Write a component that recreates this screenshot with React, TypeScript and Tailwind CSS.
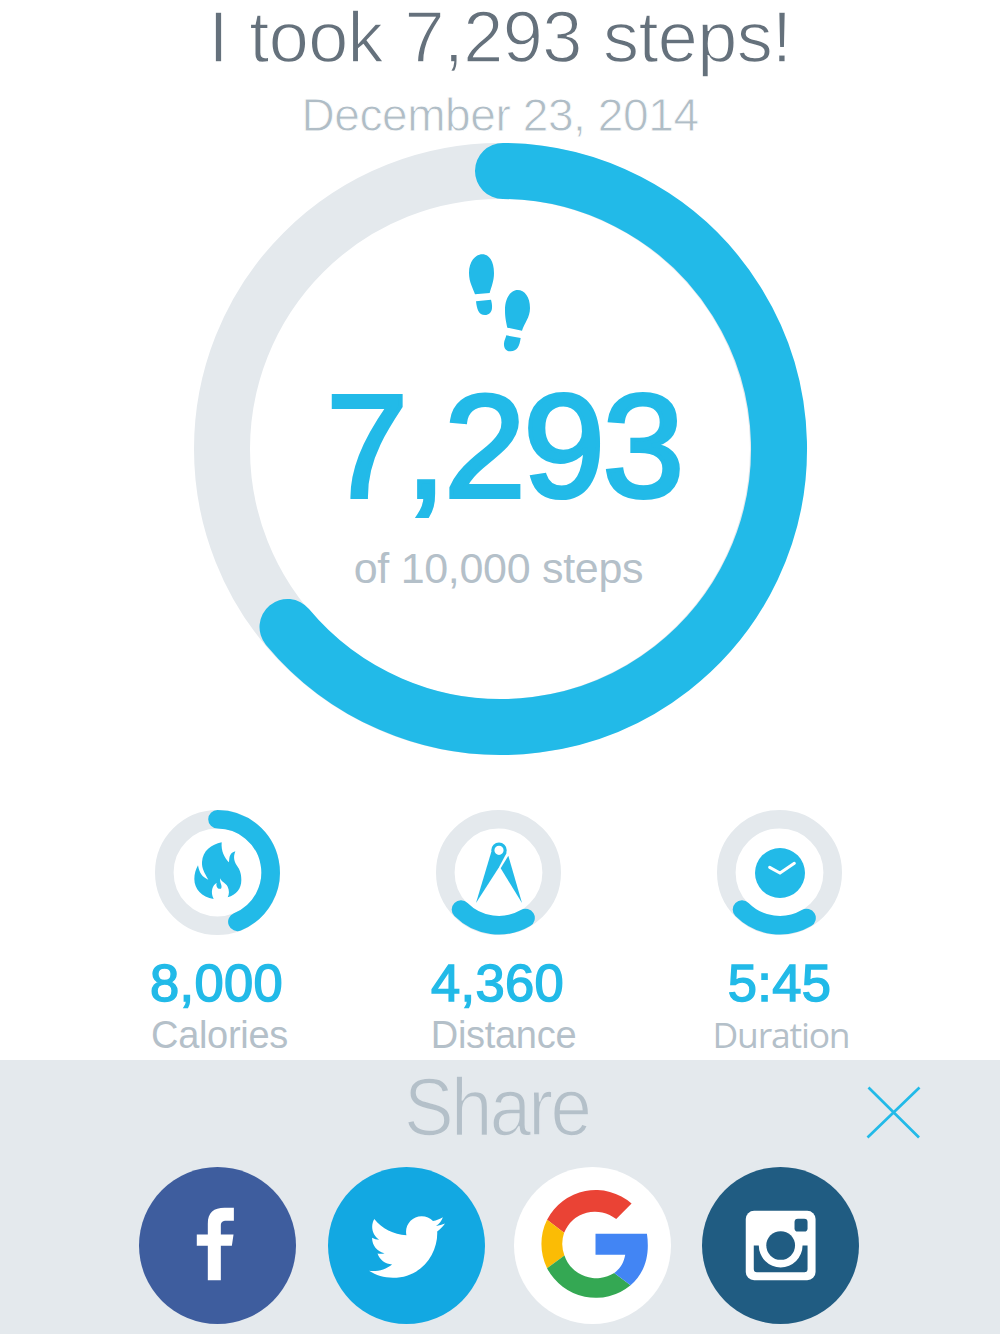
import React from 'react';
import { FaTwitter } from 'react-icons/fa';

const BLUE = '#22bae8';
const TRACK = '#e4e9ed';

interface RingProps {
  size: number;
  stroke: number;
  arc: string;
}

const Ring: React.FC<RingProps> = ({ size, stroke, arc }) => (
  <svg
    width={size}
    height={size}
    viewBox={`0 0 ${size} ${size}`}
    fill="none"
    className="overflow-visible [grid-area:1/1]"
  >
    <circle cx={size / 2} cy={size / 2} r={(size - stroke) / 2} stroke={TRACK} strokeWidth={stroke} />
    <path d={arc} stroke={BLUE} strokeWidth={stroke} strokeLinecap="round" />
  </svg>
);

const Footprints = () => (
  <svg width="62" height="98" viewBox="87 41 186 294" fill={BLUE}>
    <path d="M105 162C99 143 87 126 87 98C87 64 106 42 127 42C148 42 162 64 162 98C162 122 154 140 149 158Z" />
    <path d="M108 183L153 178C155 186 157 194 156 203C155 217 146 224 135 224C115 224 111 207 108 183Z" />
    <path d="M202 262C198 243 195 232 195 209C195 172 213 149 233 149C254 149 270 170 270 203C270 232 253 248 246 271Z" />
    <path d="M199 285L242 293C239 317 231 333 212 333C198 333 191 323 192 309C193 300 197 293 199 285Z" />
  </svg>
);

const Flame = () => (
  <svg width="48" height="58" viewBox="161 124 144 174" fill={BLUE}>
    <path d="M244 125C242 153 252 169 265 185C269 180 262 158 285 152C277 172 283 185 291 197C297 206 303 216 303 238C303 264 288 283 262 290C267 281 267 268 262 258C256 247 242 243 240 233C236 244 248 256 242 264C232 267 226 257 229 246C217 254 209 272 220 295C184 289 162 265 162 235C162 219 166 208 173 194C177 217 185 229 204 237C192 216 184 203 185 184C187 150 213 132 244 125Z" />
  </svg>
);

const Compass = () => (
  <svg width="48" height="62" viewBox="165 124 144 186">
    <path fill={BLUE} d="M214 153L260 156L237 200L168 307Z" />
    <circle cx="237" cy="149" r="18.5" fill="#fff" stroke={BLUE} strokeWidth="9.5" />
    <path fill={BLUE} d="M265 165L306 307L242 203Z" />
  </svg>
);

const Clock = () => (
  <svg width="50" height="50" viewBox="0 0 150 150" fill="none">
    <circle cx="75" cy="75" r="75" fill={BLUE} />
    <path d="M44 58L75 75L118 46" stroke="#fff" strokeWidth="9" strokeLinecap="round" strokeLinejoin="miter" />
  </svg>
);

const lowArc = 'M25 99.5A53.2 53.2 0 0 0 89.5 108';

const stats = [
  {
    value: '8,000',
    label: 'Calories',
    icon: <Flame />,
    iconClass: 'pb-1 pl-px',
    arc: 'M62.5 9.3A53.2 53.2 0 0 1 82.4 111.8',
    column: 'ml-[117px]',
    valueClass: '-ml-px',
    labelClass: 'text-[38px] tracking-[-0.3px] ml-[5px] font-["Liberation_Sans",sans-serif]',
  },
  {
    value: '4,360',
    label: 'Distance',
    icon: <Compass />,
    iconClass: 'pl-px',
    arc: lowArc,
    column: 'ml-[81px]',
    valueClass: '-ml-px',
    labelClass: 'text-[38px] tracking-[-0.3px] ml-[11px] font-["Liberation_Sans",sans-serif]',
  },
  {
    value: '5:45',
    label: 'Duration',
    icon: <Clock />,
    iconClass: '',
    arc: lowArc,
    column: 'ml-[81.5px]',
    valueClass: '',
    labelClass: '-mt-px text-[35.5px] tracking-[-1.2px] ml-[3px] font-["Open_Sans",sans-serif]',
  },
];

const FacebookLogo = () => (
  <svg width="157" height="157" viewBox="28 22 470 470">
    <circle cx="263" cy="257" r="235" fill="#3e5d9e" />
    <path
      fill="#fff"
      d="M234 361V258H201V224H234V192C234 158 252 144 284 144H312V183H290C277 183 273 187 273 199V224H311L306 258H273V361Z"
    />
  </svg>
);

const TwitterLogo = () => (
  <div className="flex h-[157px] w-[157px] items-center justify-center rounded-full bg-[#12a8e2] pt-[3px] pl-px">
    <FaTwitter size={76} color="#fff" />
  </div>
);

const GoogleLogo = () => (
  <svg width="157" height="157" viewBox="27 22 470 470">
    <circle cx="262" cy="257" r="235" fill="#fff" />
    <path fill="#ea4335" d="M126 180A164 164 0 0 1 379 131L333 178A100 100 0 0 0 177 219Z" />
    <path fill="#fbbc05" d="M126 180A164 164 0 0 0 126 325L178 287A100 100 0 0 1 177 219Z" />
    <path fill="#34a853" d="M126 325A164 164 0 0 0 376 376L327 339A100 100 0 0 1 178 287Z" />
    <path fill="#4285f4" d="M271 222H425C433 278 424 334 376 376L327 339C346 326 356 308 360 285H271Z" />
  </svg>
);

const InstagramLogo = () => (
  <svg width="157" height="157" viewBox="35 22 470 470">
    <circle cx="270" cy="257" r="235" fill="#205c82" />
    <rect x="166" y="153" width="209" height="208" rx="25" fill="#fff" />
    <path fill="#205c82" d="M190 257H205A65.5 65.5 0 0 0 336 257H351V328Q351 337 342 337H199Q190 337 190 328Z" />
    <circle cx="270.5" cy="257" r="43" fill="#205c82" />
    <rect x="312" y="177" width="39" height="38" rx="10" fill="#205c82" />
  </svg>
);

const networks = [
  { name: 'Facebook', logo: <FacebookLogo />, className: 'ml-[139px]' },
  { name: 'Twitter', logo: <TwitterLogo />, className: 'ml-8' },
  { name: 'Google', logo: <GoogleLogo />, className: 'ml-[29px]' },
  { name: 'Instagram', logo: <InstagramLogo />, className: 'ml-[31px]' },
];

export default function App() {
  return (
    <div className='flex h-[1334px] w-[1000px] flex-col bg-white font-["Liberation_Sans",sans-serif]'>
      <header className="flex h-[143px] shrink-0 flex-col items-center whitespace-nowrap">
        <h1 className="text-[72px] leading-[74px] tracking-[-0.6px] text-[#65717c] [-webkit-text-stroke:1.4px_#fff] [word-spacing:2px]">
          I took 7,293 steps!
        </h1>
        <p className="pt-[13px] text-[46px] leading-[57px] tracking-[-0.4px] text-[#b0bdc6] [-webkit-text-stroke:0.8px_#fff]">
          December 23, 2014
        </p>
      </header>

      <section className="grid h-[612px] shrink-0 justify-center">
        <Ring size={612} stroke={56} arc="M309 28A278 278 0 1 1 93.5 484" />
        <div className="flex flex-col items-center pt-[111px] whitespace-nowrap [grid-area:1/1]">
          <Footprints />
          <div className="mt-3.5 pl-2 text-[147px] leading-[160px] tracking-[-2.5px] text-[#22bae8] [-webkit-text-stroke:4px_#22bae8]">
            7,293
          </div>
          <p className="mt-[17px] -ml-[3px] text-[43px] leading-[50px] tracking-[-0.3px] text-[#b4c0c9]">
            of 10,000 steps
          </p>
        </div>
      </section>

      <section className="flex h-[305px] shrink-0 pt-[55px]">
        {stats.map((stat) => (
          <div key={stat.label} className={`flex w-[200px] flex-col items-center whitespace-nowrap ${stat.column}`}>
            <div className="grid place-items-center">
              <Ring size={125} stroke={18.6} arc={stat.arc} />
              <div className={`[grid-area:1/1] ${stat.iconClass}`}>{stat.icon}</div>
            </div>
            <div
              className={`mt-[19px] text-[52.5px] leading-[58px] tracking-[0.3px] text-[#22bae8] [-webkit-text-stroke:1.5px_#22bae8] ${stat.valueClass}`}
            >
              {stat.value}
            </div>
            <div className={`leading-[46px] text-[#b4c0c9] ${stat.labelClass}`}>{stat.label}</div>
          </div>
        ))}
      </section>

      <footer className="flex h-[274px] shrink-0 flex-col bg-[#e4e9ed]">
        <div className="grid h-[107px] grid-cols-[1fr_auto_1fr] items-center">
          <h2 className="col-start-2 -mt-3.5 -ml-1.5 scale-x-92 text-[81px] leading-[92px] tracking-[-3px] text-[#b4c0c9] [-webkit-text-stroke:1.6px_#e4e9ed]">
            Share
          </h2>
          <button type="button" aria-label="Close" className="-mt-0.5 mr-[79px] justify-self-end">
            <svg width="55" height="53" viewBox="0 0 55 53" fill="none" stroke={BLUE} strokeWidth="2.7">
              <path d="M2.5 1.5L53 51.5M53.5 1.5L1.5 51.5" />
            </svg>
          </button>
        </div>
        <div className="flex">
          {networks.map((network) => (
            <button key={network.name} type="button" aria-label={network.name} className={network.className}>
              {network.logo}
            </button>
          ))}
        </div>
      </footer>
    </div>
  );
}
